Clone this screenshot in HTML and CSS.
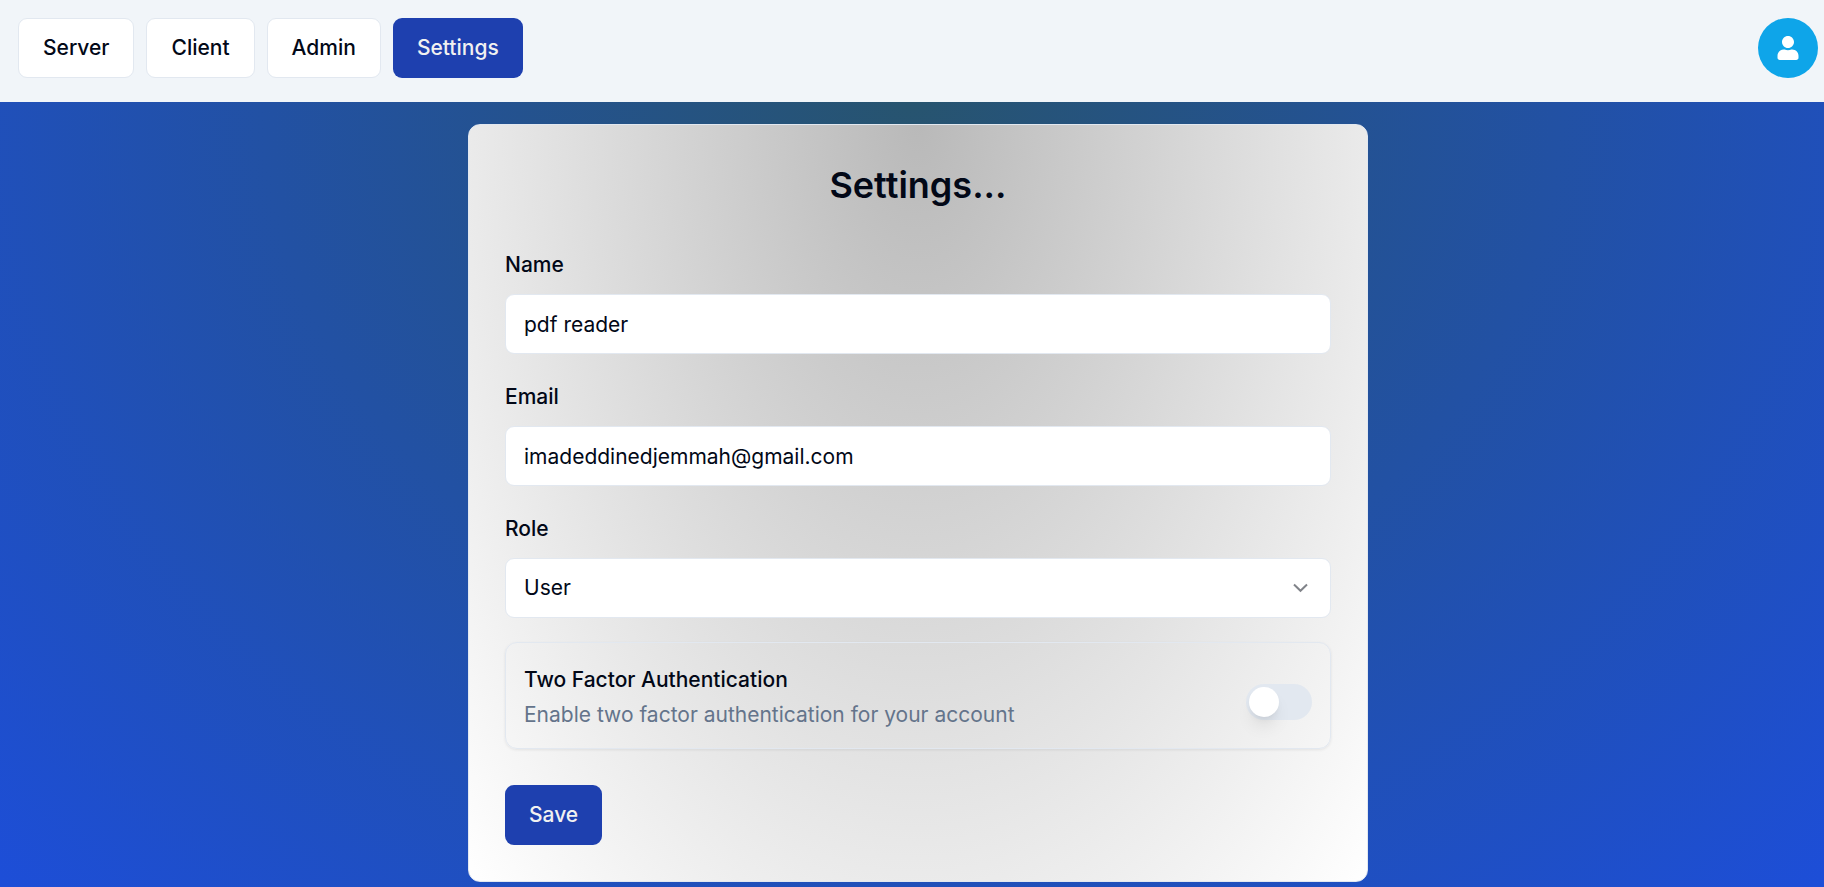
FILE: index.html
```html
<!DOCTYPE html>
<html lang="en">
<head>
<meta charset="utf-8">
<meta name="viewport" content="width=device-width, initial-scale=1">
<title>Settings</title>
<link rel="stylesheet" href="styles.css">
</head>
<body>
<header class="navbar">
  <nav class="nav-links">
    <a class="button button-outline" href="#server">Server</a>
    <a class="button button-outline" href="#client">Client</a>
    <a class="button button-outline" href="#admin">Admin</a>
    <a class="button button-primary" href="#settings" aria-current="page">Settings</a>
  </nav>
  <button class="avatar" type="button" aria-label="Account">
    <svg viewBox="0 0 448 512" aria-hidden="true"><path fill="currentColor" d="M224 256c70.700 0 128-57.300 128-128S294.700 0 224 0 96 57.300 96 128s57.300 128 128 128zm89.600 32h-16.700c-22.200 10.200-46.900 16-72.900 16s-50.600-5.800-72.900-16h-16.700C60.200 288 0 348.200 0 422.400V464c0 26.500 21.500 48 48 48h352c26.500 0 48-21.500 48-48v-41.600c0-74.200-60.200-134.400-134.400-134.400z"/></svg>
  </button>
</header>
<main class="page">
  <form class="card">
    <h1 class="title">Settings...</h1>
    <div class="fields">
      <div class="field">
        <label for="name">Name</label>
        <input class="control" id="name" type="text" value="pdf reader">
      </div>
      <div class="field">
        <label for="email">Email</label>
        <input class="control" id="email" type="email" value="imadeddinedjemmah@gmail.com">
      </div>
      <div class="field">
        <label for="role">Role</label>
        <div class="select-wrap">
          <select class="control" id="role"><option>User</option><option>Admin</option></select>
          <svg class="chevron" viewBox="0 0 24 24" aria-hidden="true"><path fill="none" stroke="currentColor" stroke-width="2" d="M5 8.500l6.500 6.300 6.500-6.300"/></svg>
        </div>
      </div>
      <div class="option">
        <div class="option-text">
          <label for="two-factor">Two Factor Authentication</label>
          <p id="two-factor-hint">Enable two factor authentication for your account</p>
        </div>
        <input class="switch" id="two-factor" type="checkbox" role="switch" aria-describedby="two-factor-hint">
      </div>
    </div>
    <button class="button button-primary save" type="submit">Save</button>
  </form>
</main>
</body>
</html>
```
FILE: styles.css
```css
* {
  box-sizing: border-box;
}

body {
  margin: 0;
  min-height: 100vh;
  display: flex;
  flex-direction: column;
  font-family: Inter, "Liberation Sans", sans-serif;
  font-size: 21px;
  line-height: 30px;
  color: #020817;
}

.navbar {
  display: flex;
  justify-content: space-between;
  align-items: flex-start;
  padding: 18px 6px 24px 18px;
  background: #f1f5f9;
}

.nav-links {
  display: flex;
  gap: 12px;
}

.button {
  display: inline-flex;
  align-items: center;
  justify-content: center;
  height: 60px;
  padding: 0 24px;
  border: 0;
  border-radius: 9px;
  font: inherit;
  font-weight: 500;
  text-decoration: none;
  cursor: pointer;
}

.button-outline {
  border: 1px solid #e2e8f0;
  background: #fff;
  color: #020817;
}

.button-primary {
  background: #1e40af;
  color: #f1f1f1;
}

.avatar {
  display: flex;
  align-items: center;
  justify-content: center;
  width: 60px;
  height: 60px;
  padding: 0;
  border: 0;
  border-radius: 50%;
  background: #0ea5e9;
  color: #fff;
  cursor: pointer;
}

.avatar svg {
  width: 22px;
  height: 24px;
}

.page {
  flex: 1;
  display: flex;
  justify-content: center;
  align-items: center;
  padding: 22px 0 6px 12px;
  background: radial-gradient(ellipse at top, #27546f, #1d4ed8);
}

.card {
  width: 100%;
  max-width: 900px;
  padding: 36px;
  border: 1px solid #e2e8f0;
  border-radius: 12px;
  background: radial-gradient(ellipse at top, #b9b9b9, #fff);
}

.title {
  margin: 0 0 37px;
  font-size: 36px;
  line-height: 48px;
  font-weight: 600;
  text-align: center;
}

.fields {
  display: flex;
  flex-direction: column;
  gap: 24px;
}

.field {
  display: flex;
  flex-direction: column;
  gap: 12px;
}

.field label,
.option label {
  padding-top: 2px;
  line-height: 34px;
  font-weight: 500;
}

.control {
  width: 100%;
  height: 60px;
  padding: 0 18px;
  border: 1px solid #e2e8f0;
  border-radius: 9px;
  background: #fff;
  color: inherit;
  font: inherit;
  appearance: none;
}

.select-wrap {
  display: grid;
  align-items: center;
}

.select-wrap > * {
  grid-area: 1 / 1;
}

.chevron {
  justify-self: end;
  width: 24px;
  height: 24px;
  margin-right: 18px;
  color: #808389;
  pointer-events: none;
}

.option {
  display: flex;
  align-items: center;
  justify-content: space-between;
  padding: 18px;
  border: 1px solid #e2e8f0;
  border-radius: 12px;
  box-shadow: 0 1px 3px rgb(0 0 0 / 8%);
}

.option p {
  margin: 0;
  color: #64748b;
}

.option-text {
  display: flex;
  flex-direction: column;
  gap: 3px;
}

.switch {
  appearance: none;
  display: flex;
  align-items: center;
  width: 66px;
  height: 36px;
  margin: 12px 0 0;
  padding: 3px;
  border-radius: 18px;
  background: #e2e8f0;
  cursor: pointer;
}

.switch::before {
  content: "";
  width: 30px;
  height: 30px;
  border-radius: 50%;
  background: #fff;
  box-shadow: 0 12px 18px -4px rgb(0 0 0 / 10%), 0 4px 8px -4px rgb(0 0 0 / 10%);
}

.switch:checked {
  background: #1e40af;
}

.switch:checked::before {
  margin-left: 30px;
}

.save {
  margin-top: 36px;
}
```
